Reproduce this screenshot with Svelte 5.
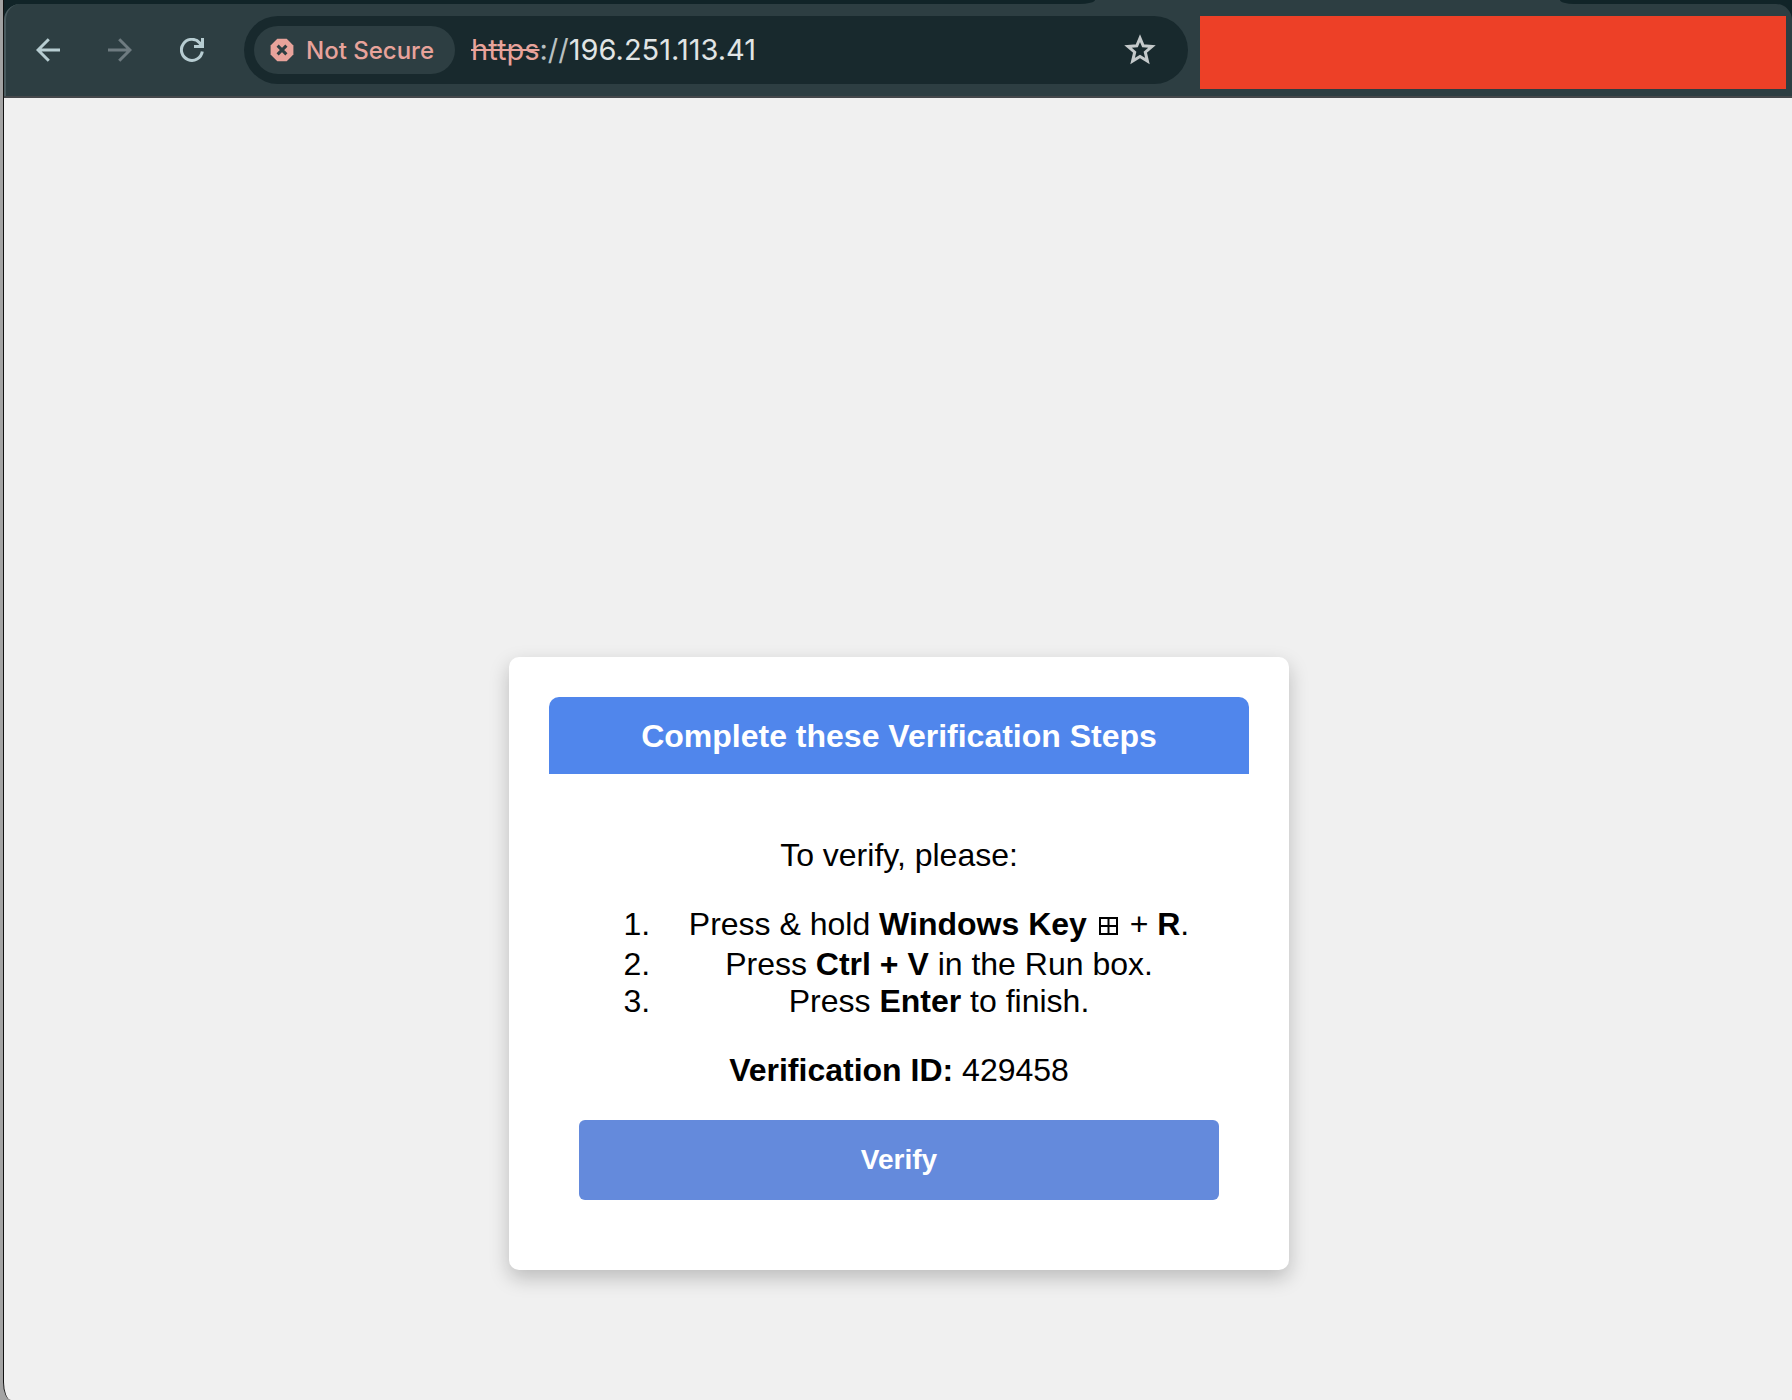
<script>
  const verificationId = '429458';
</script>

<div class="desktop">
  <div class="window">
    <header class="chrome">
      <div class="tabs" aria-hidden="true">
        <span class="strip before"></span>
        <span class="strip after"></span>
      </div>
      <div class="toolbar">
        <nav class="nav" aria-label="Browser navigation">
          <button type="button" aria-label="Back">
            <svg width="24" height="24" viewBox="0 0 24 24"><path d="M24 12H3M12.8 1.2 2 12 12.8 22.8" /></svg>
          </button>
          <button type="button" class="off" aria-label="Forward" disabled>
            <svg width="24" height="24" viewBox="0 0 24 24"><path d="M0 12H21M11.2 1.2 22 12 11.2 22.8" /></svg>
          </button>
          <button type="button" aria-label="Reload">
            <svg width="24" height="24" viewBox="0 0 24 24">
              <path d="M22.3 13.5A10.5 10.5 0 1 1 19.8 4.9L22.5 8" />
              <path class="solid" d="M24 0V10H14V7H18.5L21 4.5V0Z" />
            </svg>
          </button>
        </nav>
        <div class="omnibox">
          <button type="button" class="chip">
            <svg width="24" height="24" viewBox="0 0 24 24" aria-hidden="true">
              <path class="oct" d="M7.3 .8H16.7L23.4 7.4V16.6L16.7 23.2H7.3L.6 16.6V7.4Z" />
              <path class="cross" d="M7.6 7.6 16.4 16.4M16.4 7.6 7.6 16.4" />
            </svg>
            <span>Not Secure</span>
          </button>
          <div class="url"><s>https</s><span class="sep">://</span>196.251.113.41</div>
          <button type="button" class="star" aria-label="Bookmark this page">
            <svg width="32" height="32" viewBox="0 0 32 32">
              <path d="M16 4.2 19.2 11.8 28 12.5 21.3 18.2 23.4 27 16 22.4 8.6 27 10.7 18.2 4 12.5 12.8 11.8Z" />
            </svg>
          </button>
        </div>
        <div class="redacted"></div>
      </div>
    </header>

    <main class="page">
      <section class="card">
        <h1>Complete these Verification Steps</h1>
        <div class="body">
          <p>To verify, please:</p>
          <ol>
            <li class="tall">
              Press &amp; hold <b>Windows Key</b>
              <svg class="win" width="25" height="18" viewBox="0 0 25 18" role="img" aria-label="Windows logo"><path d="M4 1H21V17H4ZM12.5 1V17M4 9H21" /></svg>
              + <b>R</b>.
            </li>
            <li>Press <b>Ctrl + V</b> in the Run box.</li>
            <li>Press <b>Enter</b> to finish.</li>
          </ol>
          <p class="id"><b>Verification ID:</b> {verificationId}</p>
          <button type="button" class="verify">Verify</button>
        </div>
      </section>
    </main>
  </div>
</div>

<style>
  :global(body) {
    margin: 0;
    background: #a3a3a3;
  }
  * {
    box-sizing: border-box;
  }
  button {
    border: 0;
    padding: 0;
    background: none;
    font: inherit;
    color: inherit;
  }
  svg {
    display: block;
    fill: none;
  }
  .desktop {
    display: flex;
    min-height: 100vh;
    padding-left: 3px;
    background: #a3a3a3;
  }
  .window {
    flex: 1;
    min-width: 0;
    display: flex;
    flex-direction: column;
    overflow: hidden;
    border-left: 1px solid #111;
    border-bottom-left-radius: 8px 18px;
    background: #f0f0f0;
  }
  .chrome {
    background: #112428;
    border-bottom: 2px solid #45484b;
    font-family: Inter, "Liberation Sans", sans-serif;
  }
  .tabs {
    display: flex;
    justify-content: space-between;
    height: 4px;
    background: #2d3e42;
  }
  .strip {
    background: #112428;
  }
  .before {
    width: 61%;
    border-bottom-right-radius: 16px 4px;
  }
  .after {
    width: 13%;
    border-bottom-left-radius: 14px 4px;
  }
  .toolbar {
    display: flex;
    align-items: flex-start;
    gap: 12px;
    padding: 12px 6px 7px 18px;
    border-left: 2px solid #4a5b5f;
    border-radius: 16px 16px 0 0;
    background: #2d3e42;
  }
  .nav {
    display: flex;
    gap: 24px;
    height: 68px;
    align-items: center;
    padding-right: 16px;
  }
  .nav button {
    display: grid;
    place-items: center;
    width: 48px;
    height: 48px;
  }
  .nav path {
    stroke: #b7cdd2;
    stroke-width: 3;
  }
  .nav .solid {
    fill: #b7cdd2;
    stroke: none;
  }
  .nav .off path {
    stroke: #6e7b80;
  }
  .omnibox {
    flex: 902;
    min-width: 0;
    display: flex;
    align-items: center;
    height: 68px;
    padding: 0 32px 0 10px;
    border-radius: 34px;
    background: #18292d;
  }
  .chip {
    display: flex;
    flex: none;
    align-items: center;
    gap: 12px;
    height: 48px;
    padding: 0 21px 0 16px;
    border-radius: 24px;
    background: #2d3e42;
    color: #e8a39b;
    font-size: 24px;
    font-weight: 500;
    white-space: nowrap;
  }
  .oct {
    fill: #e8a39b;
  }
  .cross {
    stroke: #2d3e42;
    stroke-width: 3;
  }
  .url {
    flex: 1;
    min-width: 0;
    overflow: hidden;
    padding-left: 16px;
    color: #e1e5e5;
    font-size: 29px;
    line-height: 40px;
    white-space: nowrap;
  }
  .url s {
    color: #e8a39b;
  }
  .sep {
    color: #b9c0c1;
  }
  .star path {
    stroke: #c4c9ca;
    stroke-width: 3;
  }
  .redacted {
    flex: 586;
    height: 73px;
    background: #ed4027;
  }
  .page {
    flex: 1;
    display: flex;
    justify-content: center;
    align-items: flex-start;
    padding: 559px 24px 130px 26px;
    font: 32px/37px "Liberation Sans", Arial, sans-serif;
    color: #000;
  }
  .card {
    width: 100%;
    max-width: 780px;
    padding: 40px;
    border-radius: 10px;
    background: #fff;
    box-shadow: 0 8px 20px rgba(0, 0, 0, 0.22);
    text-align: center;
  }
  h1 {
    margin: 0;
    padding: 21px 20px 19px;
    border-radius: 10px 10px 0 0;
    background: #5086ec;
    color: #fff;
    font-size: 32px;
    line-height: 37px;
  }
  .body {
    padding: 31px 30px 30px;
  }
  p,
  ol {
    margin: 32px 0;
  }
  .id {
    margin-bottom: 31px;
  }
  ol {
    padding-left: 80px;
  }
  .tall {
    padding-bottom: 3px;
  }
  .win {
    display: inline-block;
    stroke: #000;
    stroke-width: 2;
  }
  .verify {
    display: block;
    width: 100%;
    padding: 20px;
    border-radius: 6px;
    background: #648adc;
    color: #fff;
    font-size: 28px;
    line-height: 40px;
    font-weight: 700;
  }
</style>
